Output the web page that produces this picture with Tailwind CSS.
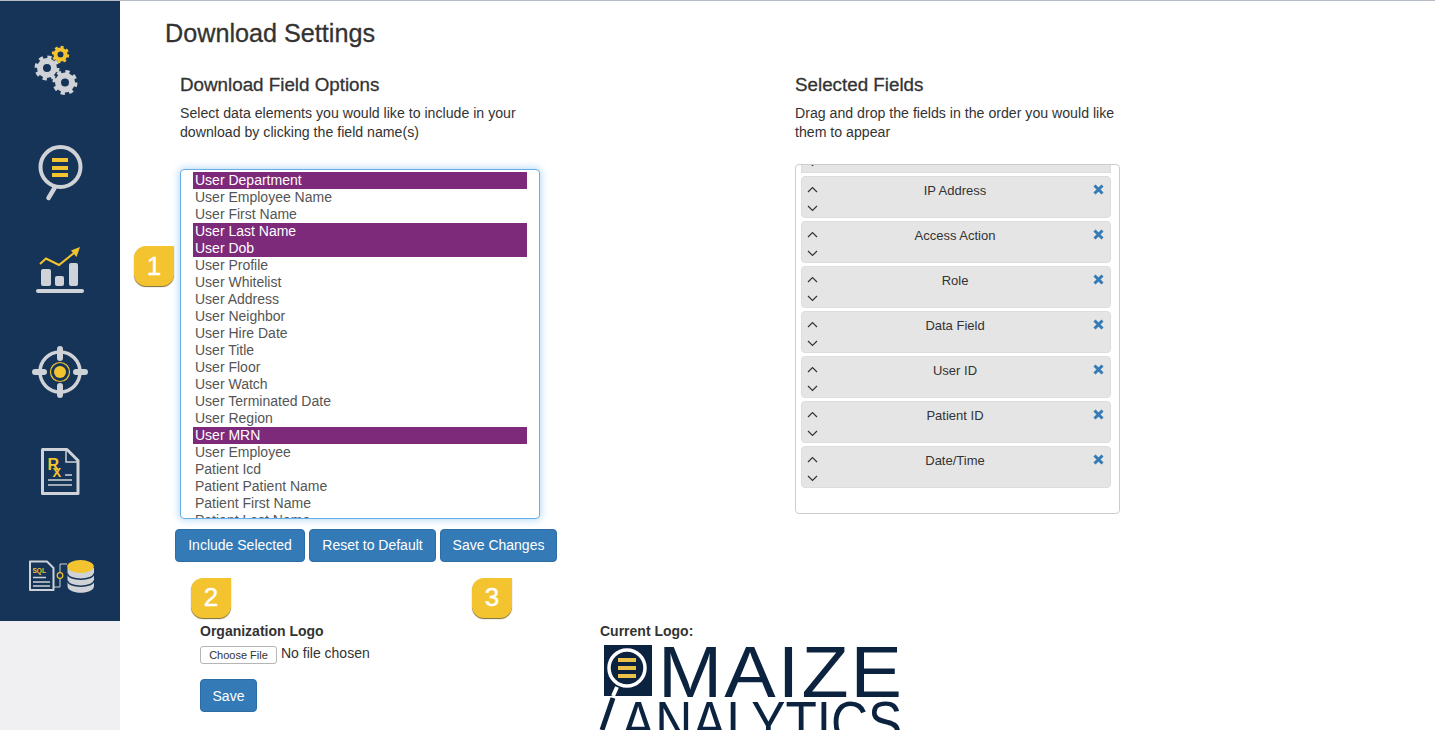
<!DOCTYPE html>
<html lang="en">
<head>
  <meta charset="UTF-8" />
  <meta name="viewport" content="width=device-width, initial-scale=1.0" />
  <title>Download Settings</title>
  <script src="https://cdn.jsdelivr.net/npm/@tailwindcss/browser@4"></script>
</head>
<body class="bg-white h-[730px] overflow-hidden font-['Liberation_Sans',Arial,sans-serif] text-[#333] border-t border-[#b5bcc4]">
<div class="flex h-[729px]">

  <!-- Sidebar -->
  <aside class="w-[120px] shrink-0 bg-[#f0f0f2]">
    <div class="h-[620px] bg-[#163457] relative">
      <svg class="absolute left-0 top-0" width="120" height="620" viewBox="0 1 120 620" fill="none">
        <!-- gears -->
        <g stroke="#cfd2d6">
          <circle cx="47" cy="68" r="7" stroke-width="6" />
          <circle cx="47" cy="68" r="10.5" stroke-width="4" stroke-dasharray="4.1 4.15" />
          <circle cx="65" cy="82.5" r="7" stroke-width="6" />
          <circle cx="65" cy="82.5" r="10.5" stroke-width="4" stroke-dasharray="4.1 4.15" />
        </g>
        <g stroke="#f4c430">
          <circle cx="60.5" cy="54.5" r="5" stroke-width="4" />
          <circle cx="60.5" cy="54.5" r="7.2" stroke-width="3" stroke-dasharray="2.8 2.85" />
        </g>
        <!-- magnifier -->
        <circle cx="60.5" cy="167" r="20" stroke="#cfd2d6" stroke-width="4" />
        <path d="M54.5 188L48.5 198" stroke="#cfd2d6" stroke-width="4.5" stroke-linecap="round" />
        <path d="M52 160h16M52 168h16M52 175h16" stroke="#f4c430" stroke-width="4" />
        <!-- chart -->
        <path d="M40 264L46 258.500L59 265L74 253" stroke="#f4c430" stroke-width="2" />
        <path d="M80 247L71 250.500L76.500 257Z" fill="#f4c430" />
        <rect x="41" y="269" width="10" height="17" rx="2" fill="#cfd2d6" />
        <rect x="55" y="276" width="9" height="10" rx="2" fill="#cfd2d6" />
        <rect x="69" y="263" width="9" height="23" rx="2" fill="#cfd2d6" />
        <rect x="36" y="289" width="48" height="4" rx="2" fill="#cfd2d6" />
        <!-- target -->
        <circle cx="60" cy="372" r="20" stroke="#cfd2d6" stroke-width="3.500" />
        <path d="M60 349v9M60 386v9M35 372h9M76 372h9" stroke="#cfd2d6" stroke-width="6" stroke-linecap="round" />
        <circle cx="60" cy="372" r="9.500" stroke="#f4c430" stroke-width="1.200" />
        <circle cx="60" cy="372" r="6" fill="#f4c430" />
        <!-- rx document -->
        <path d="M42.500 449.500H67L78 460.500V493.500H42.500Z" stroke="#cfd2d6" stroke-width="3" stroke-linejoin="round" />
        <path d="M66 450V462H78" stroke="#cfd2d6" stroke-width="1.500" />
        <text x="47.500" y="470" font-family="Liberation Sans" font-weight="700" font-size="16" fill="#f4c430">R<tspan dx="-6.500" dy="7" font-size="13">X</tspan></text>
        <path d="M65 475h7M48 480h24M48 485h24" stroke="#cfd2d6" stroke-width="1.500" />
        <!-- sql + database -->
        <path d="M30 561.500H47L53.500 568V590H30Z" stroke="#cfd2d6" stroke-width="2" stroke-linejoin="round" />
        <text x="32.500" y="572.500" font-family="Liberation Sans" font-weight="700" font-size="6.500" fill="#f4c430">SQL</text>
        <path d="M33 577.500h13M33 582h17M33 586h17" stroke="#cfd2d6" stroke-width="1.500" />
        <path d="M54 587H60V579M60 572V564H67" stroke="#cfd2d6" />
        <circle cx="60" cy="575.500" r="2.800" stroke="#f4c430" stroke-width="1.200" />
        <path d="M67.500 568V586C67.500 595 94 595 94 586V568Z" fill="#cfd2d6" />
        <path d="M67.500 573.500C68 581 93.500 581 94 573.500M67.500 580.500C68 588 93.500 588 94 580.500" stroke="#163457" stroke-width="1.500" />
        <ellipse cx="80.500" cy="566.500" rx="13.300" ry="6.500" fill="#f4c430" />
      </svg>
    </div>
  </aside>

  <!-- Main content -->
  <main class="flex-1 pl-[45px]">
    <h1 class="mt-4 text-[25.200px] leading-8 [-webkit-text-stroke:0.3px_#333]">Download Settings</h1>

    <div class="flex mt-[26px] pl-[15px]">
      <!-- Field options -->
      <section class="w-[615px] shrink-0 relative">
        <h2 class="text-[18.800px] leading-5 [-webkit-text-stroke:0.3px_#333]">Download Field Options</h2>
        <p class="mt-[9px] w-[360px] text-[14.150px] leading-[19px]">Select data elements you would like to include in your download by clicking the field name(s)</p>

        <span class="absolute -left-[46px] top-[171px] w-10 h-10 flex items-center justify-center rounded-b-xl rounded-tl-xl bg-[#f4c430] text-white text-[26px] [-webkit-text-stroke:0.4px_#fff] shadow-[0_1px_1px_#7a6a30]">1</span>

        <div class="mt-[27px] w-[360px] h-[350px] overflow-hidden bg-white border border-[#66afe9] rounded shadow-[0_0_8px_rgba(102,175,233,0.6)] pt-[2px] px-3 text-sm leading-[17px] text-[#555]">
          <div class="h-[17px] pl-[2px] bg-[#7d2a7b] text-white">User Department</div>
          <div class="h-[17px] pl-[2px]">User Employee Name</div>
          <div class="h-[17px] pl-[2px]">User First Name</div>
          <div class="h-[17px] pl-[2px] bg-[#7d2a7b] text-white">User Last Name</div>
          <div class="h-[17px] pl-[2px] bg-[#7d2a7b] text-white">User Dob</div>
          <div class="h-[17px] pl-[2px]">User Profile</div>
          <div class="h-[17px] pl-[2px]">User Whitelist</div>
          <div class="h-[17px] pl-[2px]">User Address</div>
          <div class="h-[17px] pl-[2px]">User Neighbor</div>
          <div class="h-[17px] pl-[2px]">User Hire Date</div>
          <div class="h-[17px] pl-[2px]">User Title</div>
          <div class="h-[17px] pl-[2px]">User Floor</div>
          <div class="h-[17px] pl-[2px]">User Watch</div>
          <div class="h-[17px] pl-[2px]">User Terminated Date</div>
          <div class="h-[17px] pl-[2px]">User Region</div>
          <div class="h-[17px] pl-[2px] bg-[#7d2a7b] text-white">User MRN</div>
          <div class="h-[17px] pl-[2px]">User Employee</div>
          <div class="h-[17px] pl-[2px]">Patient Icd</div>
          <div class="h-[17px] pl-[2px]">Patient Patient Name</div>
          <div class="h-[17px] pl-[2px]">Patient First Name</div>
          <div class="h-[17px] pl-[2px]">Patient Last Name</div>
        </div>

        <div class="relative flex gap-1 mt-[10px] -ml-[5px] text-sm text-white">
          <button class="w-[130px] h-[33px] pb-[2px] bg-[#337ab7] border border-[#2e6da4] rounded">Include Selected</button>
          <button class="w-[127px] h-[33px] pb-[2px] bg-[#337ab7] border border-[#2e6da4] rounded">Reset to Default</button>
          <button class="w-[117px] h-[33px] pb-[2px] bg-[#337ab7] border border-[#2e6da4] rounded">Save Changes</button>
          <span class="absolute left-[16px] top-[49px] w-10 h-10 flex items-center justify-center rounded-b-xl rounded-tl-xl bg-[#f4c430] text-white text-[26px] [-webkit-text-stroke:0.4px_#fff] shadow-[0_1px_1px_#7a6a30]">2</span>
          <span class="absolute left-[297px] top-[49px] w-10 h-10 flex items-center justify-center rounded-b-xl rounded-tl-xl bg-[#f4c430] text-white text-[26px] [-webkit-text-stroke:0.4px_#fff] shadow-[0_1px_1px_#7a6a30]">3</span>
        </div>
      </section>

      <!-- Selected fields -->
      <section class="w-[325px] shrink-0">
        <h2 class="text-[18.800px] leading-5 [-webkit-text-stroke:0.3px_#333]">Selected Fields</h2>
        <p class="mt-[9px] text-[14.150px] leading-[19px]">Drag and drop the fields in the order you would like them to appear</p>

        <div class="mt-[22px] h-[350px] overflow-hidden border border-[#ccc] rounded pl-[5px] pr-2 text-[13px] flex flex-col gap-[3px]">
          <div class="shrink-0 h-[42px] -mt-[34px] relative bg-[#e5e5e5] border border-[#ddd]">
            <svg class="absolute left-[5px] top-[9px]" width="11" height="27" viewBox="0 0 11 27" fill="none" stroke="#333" stroke-width="1.200"><path d="M1 6L5.500 1.500L10 6M1 20L5.500 24.500L10 20" /></svg>
          </div>

          <div class="shrink-0 h-[42px] relative flex justify-center pt-[4px] pr-[2px] bg-[#e5e5e5] border border-[#ddd] rounded-sm">
            <svg class="absolute left-[5px] top-[9px]" width="11" height="27" viewBox="0 0 11 27" fill="none" stroke="#333" stroke-width="1.200"><path d="M1 6L5.500 1.500L10 6M1 20L5.500 24.500L10 20" /></svg>
            <span>IP Address</span>
            <svg class="absolute right-[6px] top-[7px]" width="11" height="11" viewBox="0 0 11 11" stroke="#337ab7" stroke-width="3"><path d="M1.500 1.500L9.500 9.500M9.500 1.500L1.500 9.500" /></svg>
          </div>
          <div class="shrink-0 h-[42px] relative flex justify-center pt-[4px] pr-[2px] bg-[#e5e5e5] border border-[#ddd] rounded-sm">
            <svg class="absolute left-[5px] top-[9px]" width="11" height="27" viewBox="0 0 11 27" fill="none" stroke="#333" stroke-width="1.200"><path d="M1 6L5.500 1.500L10 6M1 20L5.500 24.500L10 20" /></svg>
            <span>Access Action</span>
            <svg class="absolute right-[6px] top-[7px]" width="11" height="11" viewBox="0 0 11 11" stroke="#337ab7" stroke-width="3"><path d="M1.500 1.500L9.500 9.500M9.500 1.500L1.500 9.500" /></svg>
          </div>
          <div class="shrink-0 h-[42px] relative flex justify-center pt-[4px] pr-[2px] bg-[#e5e5e5] border border-[#ddd] rounded-sm">
            <svg class="absolute left-[5px] top-[9px]" width="11" height="27" viewBox="0 0 11 27" fill="none" stroke="#333" stroke-width="1.200"><path d="M1 6L5.500 1.500L10 6M1 20L5.500 24.500L10 20" /></svg>
            <span>Role</span>
            <svg class="absolute right-[6px] top-[7px]" width="11" height="11" viewBox="0 0 11 11" stroke="#337ab7" stroke-width="3"><path d="M1.500 1.500L9.500 9.500M9.500 1.500L1.500 9.500" /></svg>
          </div>
          <div class="shrink-0 h-[42px] relative flex justify-center pt-[4px] pr-[2px] bg-[#e5e5e5] border border-[#ddd] rounded-sm">
            <svg class="absolute left-[5px] top-[9px]" width="11" height="27" viewBox="0 0 11 27" fill="none" stroke="#333" stroke-width="1.200"><path d="M1 6L5.500 1.500L10 6M1 20L5.500 24.500L10 20" /></svg>
            <span>Data Field</span>
            <svg class="absolute right-[6px] top-[7px]" width="11" height="11" viewBox="0 0 11 11" stroke="#337ab7" stroke-width="3"><path d="M1.500 1.500L9.500 9.500M9.500 1.500L1.500 9.500" /></svg>
          </div>
          <div class="shrink-0 h-[42px] relative flex justify-center pt-[4px] pr-[2px] bg-[#e5e5e5] border border-[#ddd] rounded-sm">
            <svg class="absolute left-[5px] top-[9px]" width="11" height="27" viewBox="0 0 11 27" fill="none" stroke="#333" stroke-width="1.200"><path d="M1 6L5.500 1.500L10 6M1 20L5.500 24.500L10 20" /></svg>
            <span>User ID</span>
            <svg class="absolute right-[6px] top-[7px]" width="11" height="11" viewBox="0 0 11 11" stroke="#337ab7" stroke-width="3"><path d="M1.500 1.500L9.500 9.500M9.500 1.500L1.500 9.500" /></svg>
          </div>
          <div class="shrink-0 h-[42px] relative flex justify-center pt-[4px] pr-[2px] bg-[#e5e5e5] border border-[#ddd] rounded-sm">
            <svg class="absolute left-[5px] top-[9px]" width="11" height="27" viewBox="0 0 11 27" fill="none" stroke="#333" stroke-width="1.200"><path d="M1 6L5.500 1.500L10 6M1 20L5.500 24.500L10 20" /></svg>
            <span>Patient ID</span>
            <svg class="absolute right-[6px] top-[7px]" width="11" height="11" viewBox="0 0 11 11" stroke="#337ab7" stroke-width="3"><path d="M1.500 1.500L9.500 9.500M9.500 1.500L1.500 9.500" /></svg>
          </div>
          <div class="shrink-0 h-[42px] relative flex justify-center pt-[4px] pr-[2px] bg-[#e5e5e5] border border-[#ddd] rounded-sm">
            <svg class="absolute left-[5px] top-[9px]" width="11" height="27" viewBox="0 0 11 27" fill="none" stroke="#333" stroke-width="1.200"><path d="M1 6L5.500 1.500L10 6M1 20L5.500 24.500L10 20" /></svg>
            <span>Date/Time</span>
            <svg class="absolute right-[6px] top-[7px]" width="11" height="11" viewBox="0 0 11 11" stroke="#337ab7" stroke-width="3"><path d="M1.500 1.500L9.500 9.500M9.500 1.500L1.500 9.500" /></svg>
          </div>
        </div>
      </section>
    </div>

    <!-- Logo -->
    <div class="flex mt-[60px] pl-[35px]">
      <div class="w-[400px] shrink-0">
        <div class="text-sm leading-[18px] font-bold">Organization Logo</div>
        <div class="flex items-start mt-[6px] text-sm leading-4">
          <button class="w-[77px] h-[18px] bg-white border border-[#b5b5b5] rounded-[3px] text-[11px] leading-4 text-[#333]">Choose File</button>
          <span class="ml-1 -mt-[1px]">No file chosen</span>
        </div>
        <button class="mt-[15px] w-[57px] h-[33px] bg-[#337ab7] border border-[#2e6da4] rounded text-sm text-white">Save</button>
      </div>
      <div>
        <div class="text-sm leading-[18px] font-bold">Current Logo:</div>
        <div class="relative w-[310px] h-[90px] mt-[5px] text-[#0c2340]">
          <svg class="absolute -left-[1px] top-0" width="54" height="86" viewBox="0 0 54 86">
            <rect x="5" y="0" width="48" height="51" fill="#0c2340" />
            <circle cx="28" cy="23" r="18" fill="none" stroke="#fff" stroke-width="3.500" />
            <path d="M19 15h18M19 23h18M19 31h18" stroke="#ecc14a" stroke-width="4" />
            <path d="M18 42L14 51" stroke="#fff" stroke-width="4" />
            <path d="M14 53L3 85" stroke="#0c2340" stroke-width="5" />
          </svg>
          <span class="absolute left-[58px] top-[1px] text-[72px] leading-[52px] tracking-[2px] origin-left scale-x-[1.07]">MAIZE</span>
          <span class="absolute left-[21px] top-[54px] text-[60px] leading-[48px] origin-left scale-x-[0.855]">ANALYTICS</span>
        </div>
      </div>
    </div>
  </main>
</div>
</body>
</html>
